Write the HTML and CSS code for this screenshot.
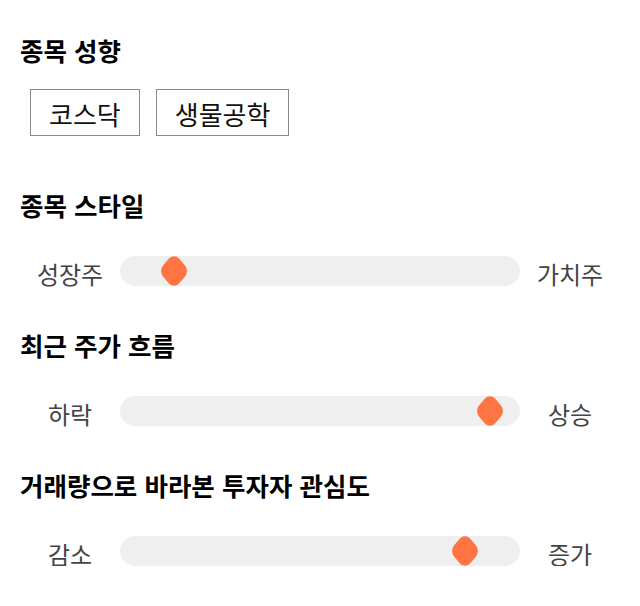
FILE: index.html
```html
<!DOCTYPE html>
<html lang="ko">
<head>
<meta charset="utf-8">
<link rel="stylesheet" href="styles.css">
</head>
<body>
<main class="page">
  <section class="sec sec-first">
    <h2 class="title">종목 성향</h2>
    <div class="tags">
      <span class="tag">코스닥</span>
      <span class="tag">생물공학</span>
    </div>
  </section>
  <section class="sec">
    <h2 class="title">종목 스타일</h2>
    <div class="row">
      <span class="lbl">성장주</span>
      <div class="track"><span class="thumb" style="left: 13.5%"></span></div>
      <span class="lbl">가치주</span>
    </div>
  </section>
  <section class="sec">
    <h2 class="title">최근 주가 흐름</h2>
    <div class="row">
      <span class="lbl">하락</span>
      <div class="track"><span class="thumb" style="left: 92.5%"></span></div>
      <span class="lbl">상승</span>
    </div>
  </section>
  <section class="sec">
    <h2 class="title">거래량으로 바라본 투자자 관심도</h2>
    <div class="row">
      <span class="lbl">감소</span>
      <div class="track"><span class="thumb" style="left: 86.3%"></span></div>
      <span class="lbl">증가</span>
    </div>
  </section>
</main>
</body>
</html>
```
FILE: styles.css
```css
html, body {
  margin: 0;
  padding: 0;
  background: #fff;
}
body {
  font-family: "Noto Sans CJK KR", "Noto Sans", sans-serif;
  color: #000;
}
.page {
  padding: 35px 20px 0 20px;
  display: flex;
  flex-direction: column;
}
.sec {
  display: flex;
  flex-direction: column;
  margin-top: 44px;
}
.sec-first {
  margin-top: 0;
}
.sec-first + .sec {
  margin-top: 54px;
}
.title {
  margin: 0;
  font-size: 25.5px;
  line-height: 30px;
  font-weight: 700;
  color: #000;
}
.tags {
  display: flex;
  gap: 16px;
  margin-top: 24px;
  padding-left: 10px;
}
.tag {
  border: 1px solid #8a8a8a;
  height: 43px;
  padding: 2px 18px 0;
  box-sizing: content-box;
  display: flex;
  align-items: center;
  font-size: 26px;
  color: #111;
}
.row {
  display: flex;
  align-items: flex-start;
  height: 30px;
  margin-top: 36px;
}
.lbl {
  width: 100px;
  height: 30px;
  box-sizing: border-box;
  padding-top: 3px;
  text-align: center;
  font-size: 24px;
  line-height: 30px;
  color: #444;
}
.track {
  flex: 1;
  height: 30px;
  border-radius: 15px;
  background: #efefef;
  position: relative;
}
.thumb {
  position: absolute;
  top: 15px;
  width: 22px;
  height: 22px;
  margin-left: -11px;
  margin-top: -11px;
  background: #ff7443;
  border-radius: 7px;
  transform: scale(1.02, 1.17) rotate(45deg);
}
```
